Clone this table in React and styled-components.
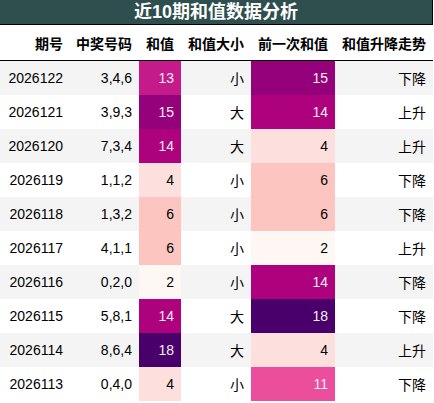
import React from "react";
import styled, { createGlobalStyle } from "styled-components";

const rows = [
  { issue: "2026122", nums: "3,4,6", sum: 13, size: "小", prev: 15, trend: "下降" },
  { issue: "2026121", nums: "3,9,3", sum: 15, size: "大", prev: 14, trend: "上升" },
  { issue: "2026120", nums: "7,3,4", sum: 14, size: "大", prev: 4, trend: "上升" },
  { issue: "2026119", nums: "1,1,2", sum: 4, size: "小", prev: 6, trend: "下降" },
  { issue: "2026118", nums: "1,3,2", sum: 6, size: "小", prev: 6, trend: "下降" },
  { issue: "2026117", nums: "4,1,1", sum: 6, size: "小", prev: 2, trend: "上升" },
  { issue: "2026116", nums: "0,2,0", sum: 2, size: "小", prev: 14, trend: "下降" },
  { issue: "2026115", nums: "5,8,1", sum: 14, size: "大", prev: 18, trend: "下降" },
  { issue: "2026114", nums: "8,6,4", sum: 18, size: "大", prev: 4, trend: "上升" },
  { issue: "2026113", nums: "0,4,0", sum: 4, size: "小", prev: 11, trend: "下降" },
];

// RdPu gradient, min 2 / max 18
const shades = {
  2: ["#fff7f3", "#000000"],
  4: ["#fde0dd", "#000000"],
  6: ["#fcc5c0", "#000000"],
  11: ["#ea4e9c", "#f1f1f1"],
  13: ["#c51a8a", "#f1f1f1"],
  14: ["#ae017e", "#f1f1f1"],
  15: ["#94017a", "#f1f1f1"],
  18: ["#49006a", "#f1f1f1"],
};

const headers = ["期号", "中奖号码", "和值", "和值大小", "前一次和值", "和值升降走势"];
const widths = [70, 69, 42, 70, 84, 98];

const GlobalStyle = createGlobalStyle`
  body {
    margin: 0;
    background: #ffffff;
    font-family: "Liberation Sans", Arial, "Noto Sans CJK SC", sans-serif;
  }
`;

const Table = styled.table`
  width: 433px;
  border-collapse: collapse;
  table-layout: fixed;
  font-size: 14px;
  color: #000000;
`;

const Caption = styled.caption`
  height: 24px;
  line-height: 24px;
  background: #2f4f4f;
  color: #ffffff;
  font-size: 18px;
  font-weight: bold;
  text-align: center;
  border-right: 1px solid #000000;
  border-bottom: 1px solid #000000;
`;

const HeadCell = styled.th`
  height: 35px;
  padding: 0 7px 0 0;
  text-align: right;
  font-weight: bold;
  font-size: 14px;
  border-bottom: 1px solid #000000;
  white-space: nowrap;
`;

const Row = styled.tr`
  background: ${(p) => (p.$odd ? "#f4f4f4" : "#ffffff")};
`;

const Cell = styled.td`
  height: 34px;
  padding: 0 7px 0 0;
  text-align: right;
  white-space: nowrap;
  background: ${(p) => p.$bg || "transparent"};
  color: ${(p) => p.$fg || "#000000"};
`;

const ShadedCell = ({ value }) => {
  const [bg, fg] = shades[value];
  return (
    <Cell $bg={bg} $fg={fg}>
      {value}
    </Cell>
  );
};

const App = () => (
  <>
    <GlobalStyle />
    <Table>
      <Caption>近10期和值数据分析</Caption>
      <colgroup>
        {widths.map((w, i) => (
          <col key={i} style={{ width: w }} />
        ))}
      </colgroup>
      <thead>
        <tr>
          {headers.map((h) => (
            <HeadCell key={h}>{h}</HeadCell>
          ))}
        </tr>
      </thead>
      <tbody>
        {rows.map((r, i) => (
          <Row key={r.issue} $odd={i % 2 === 0}>
            <Cell>{r.issue}</Cell>
            <Cell>{r.nums}</Cell>
            <ShadedCell value={r.sum} />
            <Cell>{r.size}</Cell>
            <ShadedCell value={r.prev} />
            <Cell>{r.trend}</Cell>
          </Row>
        ))}
      </tbody>
    </Table>
  </>
);

export default App;
